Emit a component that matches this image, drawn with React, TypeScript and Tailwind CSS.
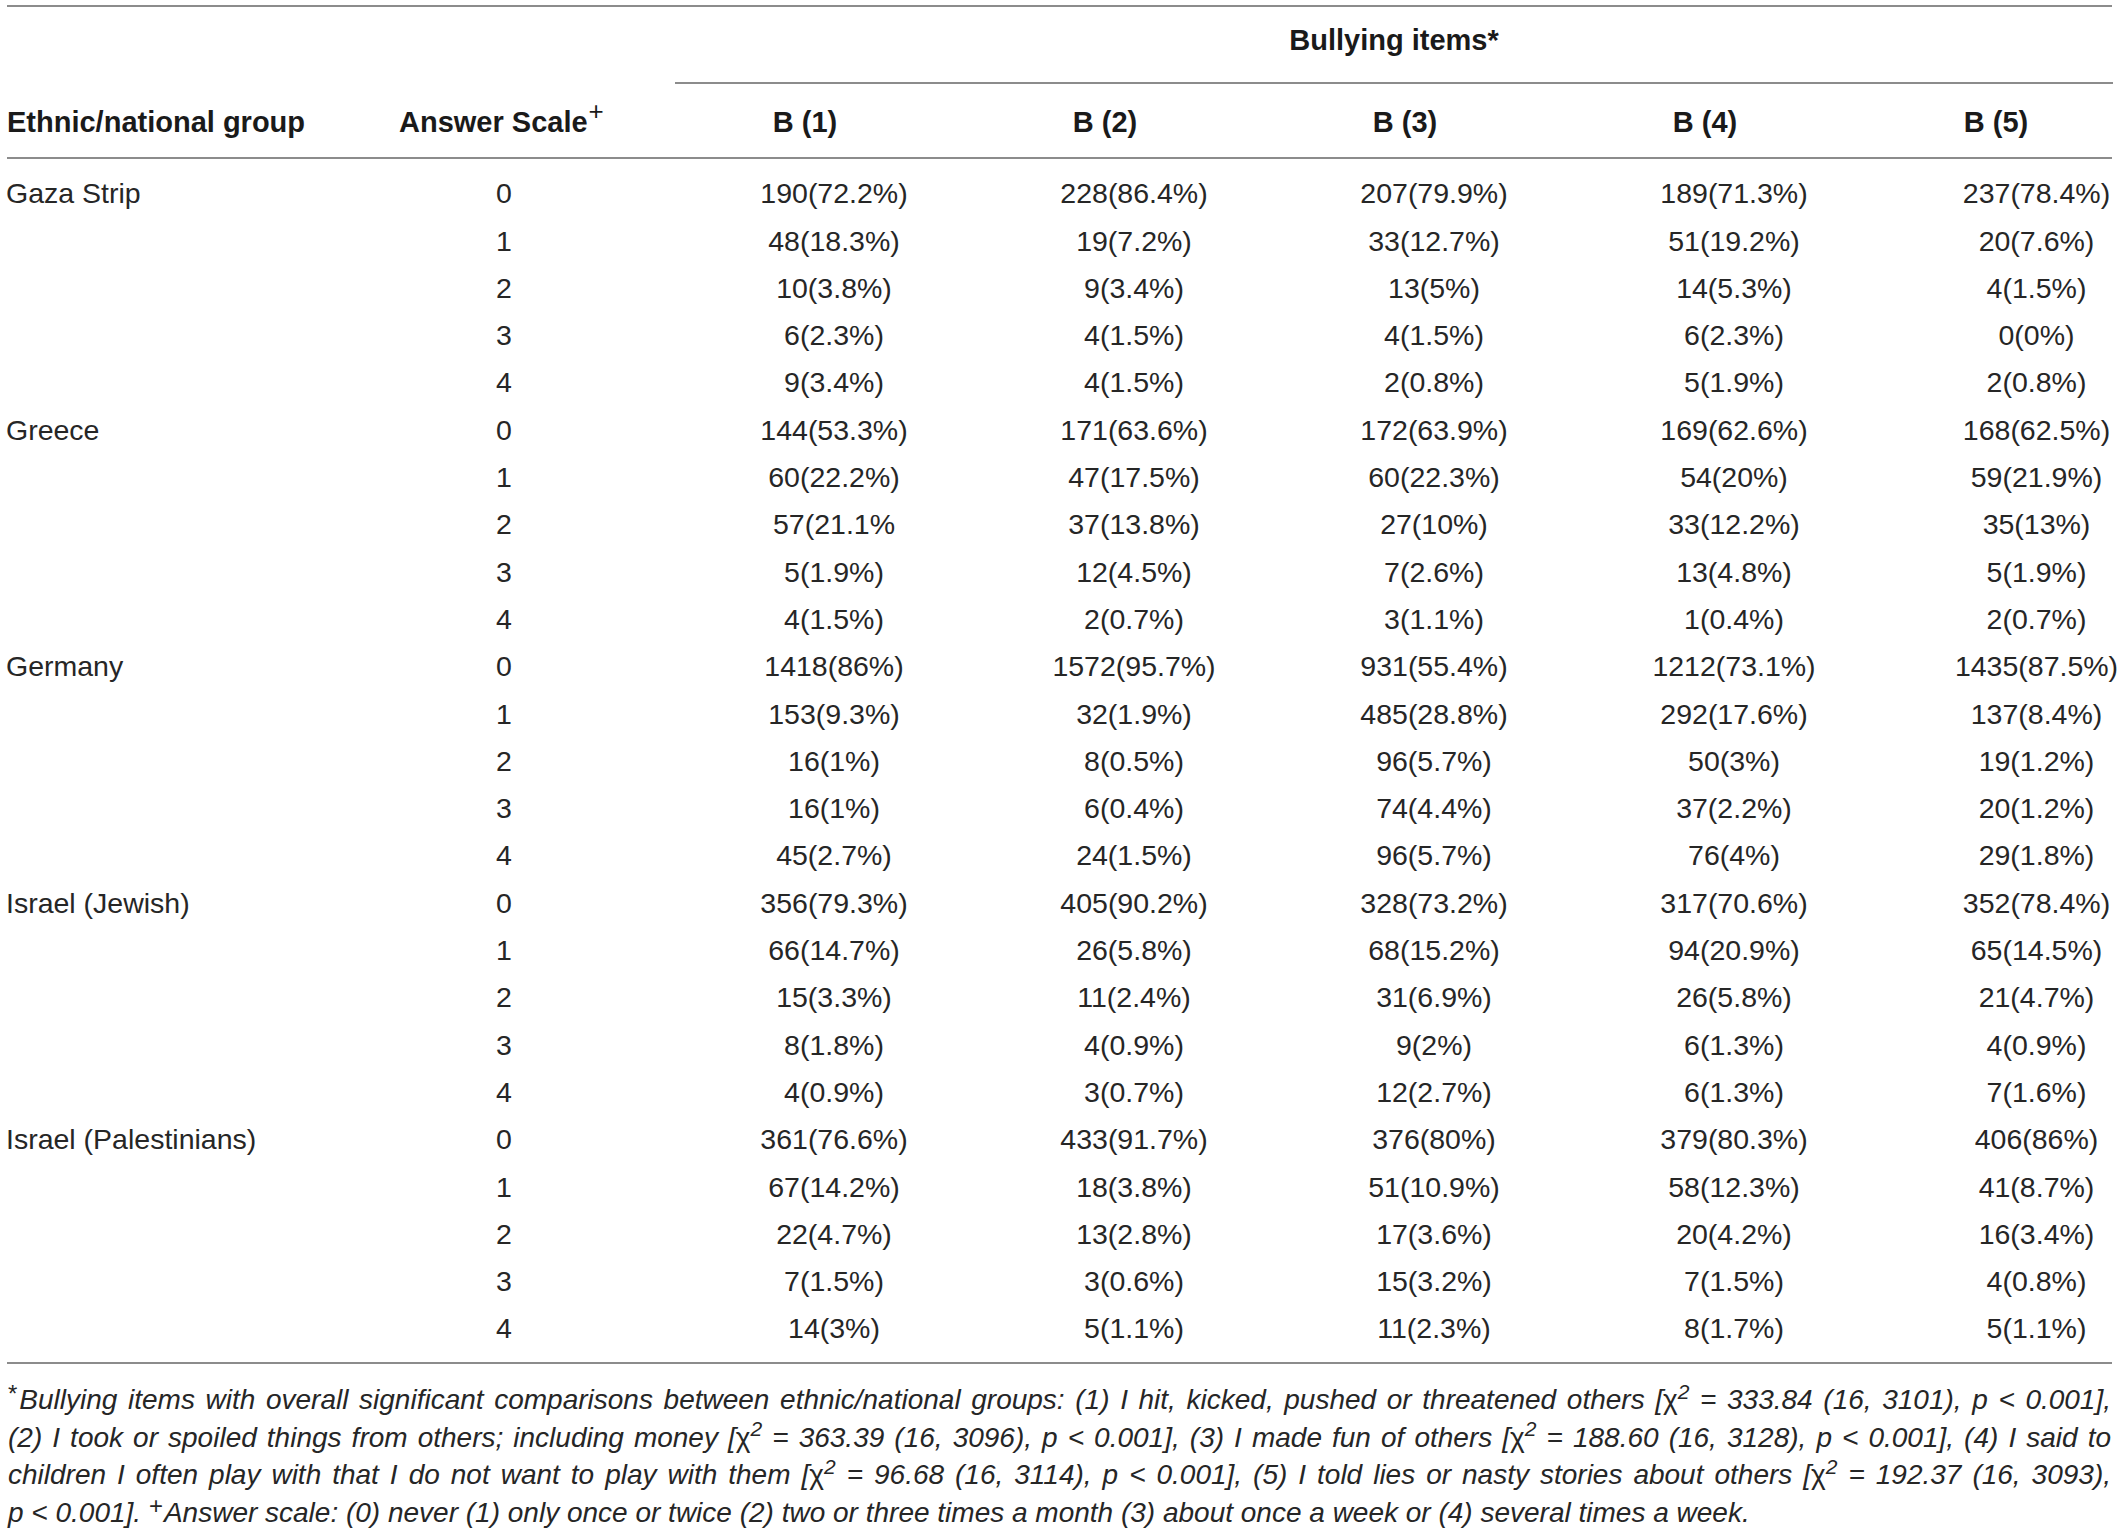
import React from 'react';

interface Group {
  name: string;
  rows: string[][];
}

const groups: Group[] = [
  {
    name: 'Gaza Strip',
    rows: [
      ['190(72.2%)', '228(86.4%)', '207(79.9%)', '189(71.3%)', '237(78.4%)'],
      ['48(18.3%)', '19(7.2%)', '33(12.7%)', '51(19.2%)', '20(7.6%)'],
      ['10(3.8%)', '9(3.4%)', '13(5%)', '14(5.3%)', '4(1.5%)'],
      ['6(2.3%)', '4(1.5%)', '4(1.5%)', '6(2.3%)', '0(0%)'],
      ['9(3.4%)', '4(1.5%)', '2(0.8%)', '5(1.9%)', '2(0.8%)'],
    ],
  },
  {
    name: 'Greece',
    rows: [
      ['144(53.3%)', '171(63.6%)', '172(63.9%)', '169(62.6%)', '168(62.5%)'],
      ['60(22.2%)', '47(17.5%)', '60(22.3%)', '54(20%)', '59(21.9%)'],
      ['57(21.1%', '37(13.8%)', '27(10%)', '33(12.2%)', '35(13%)'],
      ['5(1.9%)', '12(4.5%)', '7(2.6%)', '13(4.8%)', '5(1.9%)'],
      ['4(1.5%)', '2(0.7%)', '3(1.1%)', '1(0.4%)', '2(0.7%)'],
    ],
  },
  {
    name: 'Germany',
    rows: [
      ['1418(86%)', '1572(95.7%)', '931(55.4%)', '1212(73.1%)', '1435(87.5%)'],
      ['153(9.3%)', '32(1.9%)', '485(28.8%)', '292(17.6%)', '137(8.4%)'],
      ['16(1%)', '8(0.5%)', '96(5.7%)', '50(3%)', '19(1.2%)'],
      ['16(1%)', '6(0.4%)', '74(4.4%)', '37(2.2%)', '20(1.2%)'],
      ['45(2.7%)', '24(1.5%)', '96(5.7%)', '76(4%)', '29(1.8%)'],
    ],
  },
  {
    name: 'Israel (Jewish)',
    rows: [
      ['356(79.3%)', '405(90.2%)', '328(73.2%)', '317(70.6%)', '352(78.4%)'],
      ['66(14.7%)', '26(5.8%)', '68(15.2%)', '94(20.9%)', '65(14.5%)'],
      ['15(3.3%)', '11(2.4%)', '31(6.9%)', '26(5.8%)', '21(4.7%)'],
      ['8(1.8%)', '4(0.9%)', '9(2%)', '6(1.3%)', '4(0.9%)'],
      ['4(0.9%)', '3(0.7%)', '12(2.7%)', '6(1.3%)', '7(1.6%)'],
    ],
  },
  {
    name: 'Israel (Palestinians)',
    rows: [
      ['361(76.6%)', '433(91.7%)', '376(80%)', '379(80.3%)', '406(86%)'],
      ['67(14.2%)', '18(3.8%)', '51(10.9%)', '58(12.3%)', '41(8.7%)'],
      ['22(4.7%)', '13(2.8%)', '17(3.6%)', '20(4.2%)', '16(3.4%)'],
      ['7(1.5%)', '3(0.6%)', '15(3.2%)', '7(1.5%)', '4(0.8%)'],
      ['14(3%)', '5(1.1%)', '11(2.3%)', '8(1.7%)', '5(1.1%)'],
    ],
  },
];

// one class per B column; the last column is narrower so it gets a left pad
const valueCls = ['text-center', 'text-center', 'text-center', 'text-center', 'text-center pl-[70px]'];
const headCls = ['text-center pr-[58px]', 'text-center pr-[58px]', 'text-center pr-[58px]', 'text-center pr-[58px]', 'text-center pr-[11px]'];

const gridCols = 'grid grid-cols-[399px_285px_300px_300px_300px_300px_235px]';

const Rule = ({ className = '' }: { className?: string }) => (
  <div className={`h-[2px] bg-[#8c8c8c] ${className}`} />
);

const Chi = () => (
  <>
    [<span className="not-italic">χ</span>
    <sup>2</sup>
  </>
);

const FootLine = ({ children, last = false }: { children: React.ReactNode; last?: boolean }) => (
  <div className={`h-[37.5px] whitespace-nowrap ${last ? 'text-left' : 'text-justify [text-align-last:justify]'}`}>
    {children}
  </div>
);

export default function App() {
  return (
    <div className="w-[2119px] bg-white text-[#262626] font-['Liberation_Sans',Arial,sans-serif] pt-[5px]">
      <Rule className="mx-[7px]" />

      {/* Bullying items header */}
      <div className={`${gridCols} h-[75px] items-center pb-[7px] text-[#1a1a1a]`}>
        <div className="col-start-3 col-span-5 text-center pr-[15px] text-[29px] font-bold">Bullying items*</div>
      </div>
      <Rule className="ml-[675px] mr-[6px]" />

      {/* column header row */}
      <div className={`${gridCols} h-[73px] items-center pt-[4px] text-[29px] font-bold text-[#1a1a1a]`}>
        <div className="pl-[7px]">Ethnic/national group</div>
        <div>
          Answer Scale<sup className="font-normal text-[26px] top-[-0.45em] ml-[1px]">+</sup>
        </div>
        {['B (1)', 'B (2)', 'B (3)', 'B (4)', 'B (5)'].map((h, i) => (
          <div key={h} className={headCls[i]}>
            {h}
          </div>
        ))}
      </div>
      <Rule className="mx-[7px]" />

      {/* body */}
      <div className="pt-[11px] pb-[10px] text-[28.5px]">
        {groups.map((g) =>
          g.rows.map((row, r) => (
            <div key={`${g.name}-${r}`} className={`${gridCols} h-[47.3px] items-center`}>
              <div className="pl-[6px]">{r === 0 ? g.name : ''}</div>
              <div className="w-[210px] text-center">{r}</div>
              {row.map((v, i) => (
                <div key={i} className={valueCls[i]}>
                  {v}
                </div>
              ))}
            </div>
          ))
        )}
      </div>
      <Rule className="mx-[7px]" />

      {/* footnotes */}
      <div className="pt-[17px] pl-[8px] pr-[8px] italic text-[28px] leading-[37.5px]">
        <FootLine>
          <sup className="not-italic text-[24px] top-[-0.3em] mr-[2px]">*</sup>Bullying items with overall significant comparisons between ethnic/national groups: (1) I hit, kicked, pushed or threatened others <Chi /> = 333.84 (16, 3101), p &lt; 0.001],
        </FootLine>
        <FootLine>
          (2) I took or spoiled things from others; including money <Chi /> = 363.39 (16, 3096), p &lt; 0.001], (3) I made fun of others <Chi /> = 188.60 (16, 3128), p &lt; 0.001], (4) I said to
        </FootLine>
        <FootLine>
          children I often play with that I do not want to play with them <Chi /> = 96.68 (16, 3114), p &lt; 0.001], (5) I told lies or nasty stories about others <Chi /> = 192.37 (16, 3093),
        </FootLine>
        <FootLine last>
          p &lt; 0.001]. <sup className="not-italic text-[24px] top-[-0.35em] mr-[1px]">+</sup>Answer scale: (0) never (1) only once or twice (2) two or three times a month (3) about once a week or (4) several times a week.
        </FootLine>
      </div>
    </div>
  );
}
